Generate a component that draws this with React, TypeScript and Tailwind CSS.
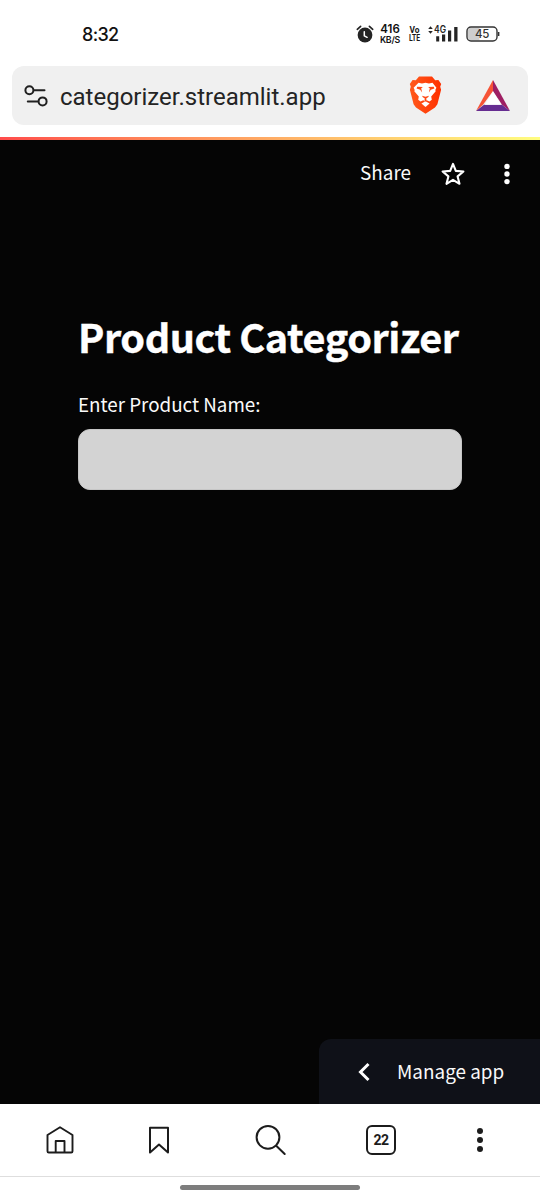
const sourceSans = "font-['Noto_Sans_CJK_JP','Noto_Sans',sans-serif]";

function StatusBar() {
  return (
    <header className="flex h-[66px] shrink-0 items-start justify-between pt-[22px] pr-[39px] pl-[82px] font-['Inter',sans-serif] text-[#111]">
      <time className="text-[18px] leading-[25px] font-medium tracking-[-0.7px]">8:32</time>
      <div className="flex h-6 items-center">
        <svg className="h-[18px] w-[18px]" viewBox="0 0 18 18">
          <circle cx="9" cy="10" r="7.4" fill="#242424" />
          <path d="M1.3 4.3 4.6 1.3M16.7 4.3 13.4 1.3" stroke="#242424" strokeWidth="1.7" strokeLinecap="round" />
          <path d="M8.3 6.8v4l2.8 1.5" fill="none" stroke="#fff" strokeWidth="1.5" strokeLinecap="round" />
        </svg>
        <div className="ml-[5px] flex w-[22px] flex-col items-center font-semibold">
          <span className="text-[11.5px] leading-[11px]">416</span>
          <span className="text-[8.8px] leading-[9px] tracking-[-0.2px] whitespace-nowrap">KB/S</span>
        </div>
        <svg className="ml-[7px] h-[24px] w-[13px] font-['Roboto',sans-serif] font-bold" viewBox="0 0 13 24" fill="#181818">
          <text x="1.5" y="11" fontSize="9.5" textLength="10" lengthAdjust="spacingAndGlyphs">Vo</text>
          <text x="1" y="19.3" fontSize="9.5" textLength="11" lengthAdjust="spacingAndGlyphs">LTE</text>
        </svg>
        <svg className="ml-[7px] h-[20px] w-[32px]" viewBox="0 0 32 20">
          <path d="M.2 5 2.5 2.2 4.8 5ZM.2 7 2.5 9.8 4.8 7Z" fill="#242424" />
          <text x="6" y="9.4" fontSize="10" fontWeight="600" fill="#242424" textLength="12" lengthAdjust="spacingAndGlyphs">4G</text>
          <path d="M8.2 12.3h3v5.2h-3ZM14 10.5h3.2v7H14ZM20 6.5h3.2v11H20ZM26.2 3h3.3v14.5h-3.3Z" fill="#242424" />
        </svg>
        <svg className="ml-[6px] h-[16px] w-[35px]" viewBox="0 0 35 16">
          <path d="M5 1.8h8.5v12.4H5a3 3 0 0 1-3-3V4.8a3 3 0 0 1 3-3Z" fill="#cecece" />
          <rect x="1" y="1" width="30" height="14" rx="4" fill="none" stroke="#333" strokeWidth="1.4" />
          <path d="M32.6 6v4" stroke="#333" strokeWidth="1.6" />
          <text x="16" y="12.2" textAnchor="middle" fontSize="11.5" fontWeight="500" letterSpacing="-.4" fill="#333">45</text>
        </svg>
      </div>
    </header>
  );
}

function AddressBar() {
  return (
    <div className="mx-3 flex h-[59px] shrink-0 items-center rounded-[12px] bg-[#f0f0f0] pr-[18px] pl-[12px]">
      <svg className="h-6 w-6" viewBox="0 0 24 24" fill="none" stroke="#202020" strokeWidth="2">
        <circle cx="5.4" cy="6.2" r="4" />
        <circle cx="18.6" cy="17.4" r="4" />
        <path d="M10.3 6.2H20.5M3.8 17.4H14" strokeLinecap="round" />
      </svg>
      <span className="relative top-px ml-[12px] font-['Roboto',sans-serif] text-[24px] leading-8 whitespace-nowrap text-[#242424]">
        categorizer.streamlit.app
      </span>
      <div className="ml-auto flex items-center gap-[34px]">
        <svg className="relative top-[-1px] h-[38px] w-[33px]" viewBox="0 0 33 38">
          <defs>
            <linearGradient id="lion" x1="0" x2="1">
              <stop offset="0" stopColor="#ff5a1c" />
              <stop offset="1" stopColor="#ff3000" />
            </linearGradient>
          </defs>
          <path d="M10 .6h13l3.2 3.6 3.2-.1 2.8 4-1 2.6.9 3.1-3.7 14.5-2.4 3.2-9.5 6.2-9.5-6.2-2.4-3.2L.9 13.8l.9-3.1-1-2.6 2.8-4 3.2.1Z" fill="url(#lion)" />
          <path d="m9.5 6.8 3.5.7 3.5-.8 3.5.8 3.5-.7 3.9 4.9-1.1 2.2.4 1.4-4.5 5.2.6 3.2-2.3 1.7-2.8-1.2-1.7 1.2-1.7-1.2-2.8 1.2-2.3-1.7.6-3.2-4.5-5.2.4-1.4-1.1-2.2Z" fill="#fff" />
          <path d="m16.5 25.3 4.1 2.2-4.1 3.4-4.1-3.4Z" fill="#fff" />
          <path d="m8.2 10.8 5.7.2-1.7 1.3.9 4.3-1.9-2.8-3.6-1.2ZM24.8 10.8l-5.7.2 1.7 1.3-.9 4.3 1.9-2.8 3.6-1.2ZM13 19.7l3.5 1.1 3.5-1.1-.9 1.6-1.9 1.3.4 2-1.1.9-1.1-.9.4-2-1.9-1.3Z" fill="#ff4815" />
        </svg>
        <svg className="h-[31px] w-[34px]" viewBox="0 0 34 31">
          <path d="M17 0 0 31l7-6.2L17 11Z" fill="#f65336" />
          <path d="M17 0v11l9 13.8L34 31Z" fill="#9e1f63" />
          <path d="M0 31h34l-8-6.2H8Z" fill="#662d91" />
          <path d="m17 11.5 8.3 13.3H8.7Z" fill="#fff" />
        </svg>
      </div>
    </div>
  );
}

function AppPage() {
  return (
    <main className={`flex min-h-0 flex-1 flex-col bg-[#050505] text-[#fafafa] ${sourceSans}`}>
      <div className="flex h-[66px] shrink-0 items-center justify-end pr-[30px]">
        <button className="pb-[2px] text-[18.9px] leading-7">Share</button>
        <svg className="relative top-[1px] ml-[30px] h-[24px] w-[24px]" viewBox="0 0 24 24" fill="none" stroke="#fff" strokeWidth="2.1" strokeLinejoin="round">
          <path d="m12 1.9 2.8 7 7.6.6-5.8 4.9 1.9 7.4-6.5-4-6.5 4 1.9-7.4-5.8-4.9 7.6-.6Z" />
        </svg>
        <svg className="relative top-[1px] ml-[39px] h-[22px] w-[6px]" viewBox="0 0 6 22" fill="#fff">
          <circle cx="3" cy="3.4" r="2.7" /><circle cx="3" cy="11" r="2.7" /><circle cx="3" cy="18.6" r="2.7" />
        </svg>
      </div>
      <section className="px-[78px] pt-[104px]">
        <h1 className="text-[39.6px] leading-[52px] font-bold tracking-[-0.42px] whitespace-nowrap text-white [-webkit-text-stroke:0.4px_white]">Product Categorizer</h1>
        <label htmlFor="product" className="mt-[28px] block text-[18.8px] leading-[28px]">Enter Product Name:</label>
        <input id="product" className="mt-[11px] block h-[61px] w-full rounded-[12px] border border-[#c6c6c6] bg-[#d3d3d3] px-4 text-black outline-none" />
      </section>
      <button className="mt-auto flex h-[65px] w-[221px] shrink-0 items-center self-end rounded-tl-[12px] bg-[#0f1118] pl-[39px]">
        <svg className="h-[20px] w-[12px]" viewBox="0 0 12 20" fill="none" stroke="#fff" strokeWidth="3">
          <path d="M10.5 2 2.5 10l8 8" />
        </svg>
        <span className="ml-[27px] pb-[2px] text-[18.9px] leading-7 whitespace-nowrap">Manage app</span>
      </button>
    </main>
  );
}

function BottomBar() {
  return (
    <footer className="flex h-[96px] shrink-0 flex-col items-center bg-white">
      <nav className="flex h-[73px] w-full items-center border-b border-[#dedede] pl-[46px]">
        <svg className="h-[28px] w-[28px]" viewBox="0 0 28 28" fill="none" stroke="#1c1c1c" strokeWidth="1.9" strokeLinejoin="round">
          <path d="M1.5 9 14 1.3 26.5 9v16.2a1.3 1.3 0 0 1-1.3 1.3H2.8a1.3 1.3 0 0 1-1.3-1.3ZM9.7 26.3V15h8.8v11.3" />
        </svg>
        <svg className="ml-[74px] h-[28px] w-[22px]" viewBox="0 0 22 28" fill="none" stroke="#1c1c1c" strokeWidth="2" strokeLinejoin="round">
          <path d="M2 1.8h18v24.7l-9-8-9 8Z" />
        </svg>
        <svg className="ml-[85px] h-[32px] w-[32px]" viewBox="0 0 32 32" fill="none" stroke="#1c1c1c" strokeWidth="2" strokeLinecap="round">
          <circle cx="13" cy="13.3" r="11.4" />
          <path d="m21.2 21.7 8.5 8.3" />
        </svg>
        <div className="ml-[79px] flex h-[30px] w-[30px] items-center justify-center rounded-[6px] border-2 border-[#1c1c1c] font-['Roboto',sans-serif] text-[14px] leading-none font-bold tracking-[-0.5px] text-[#1c1c1c]">22</div>
        <svg className="ml-[81px] h-[26px] w-[6px]" viewBox="0 0 6 26" fill="#1c1c1c">
          <circle cx="3" cy="4" r="3" /><circle cx="3" cy="13" r="3" /><circle cx="3" cy="22" r="3" />
        </svg>
      </nav>
      <div className="mt-[8px] h-[5px] w-[180px] rounded-full bg-[#7d7d7d]" />
    </footer>
  );
}

export default function App() {
  return (
    <div className="flex h-[1200px] w-[540px] flex-col overflow-hidden bg-white">
      <StatusBar />
      <AddressBar />
      <div className="mt-[12px] h-[3px] shrink-0 bg-linear-to-r from-[#ff4b4b] to-[#fffd80]" />
      <AppPage />
      <BottomBar />
    </div>
  );
}
